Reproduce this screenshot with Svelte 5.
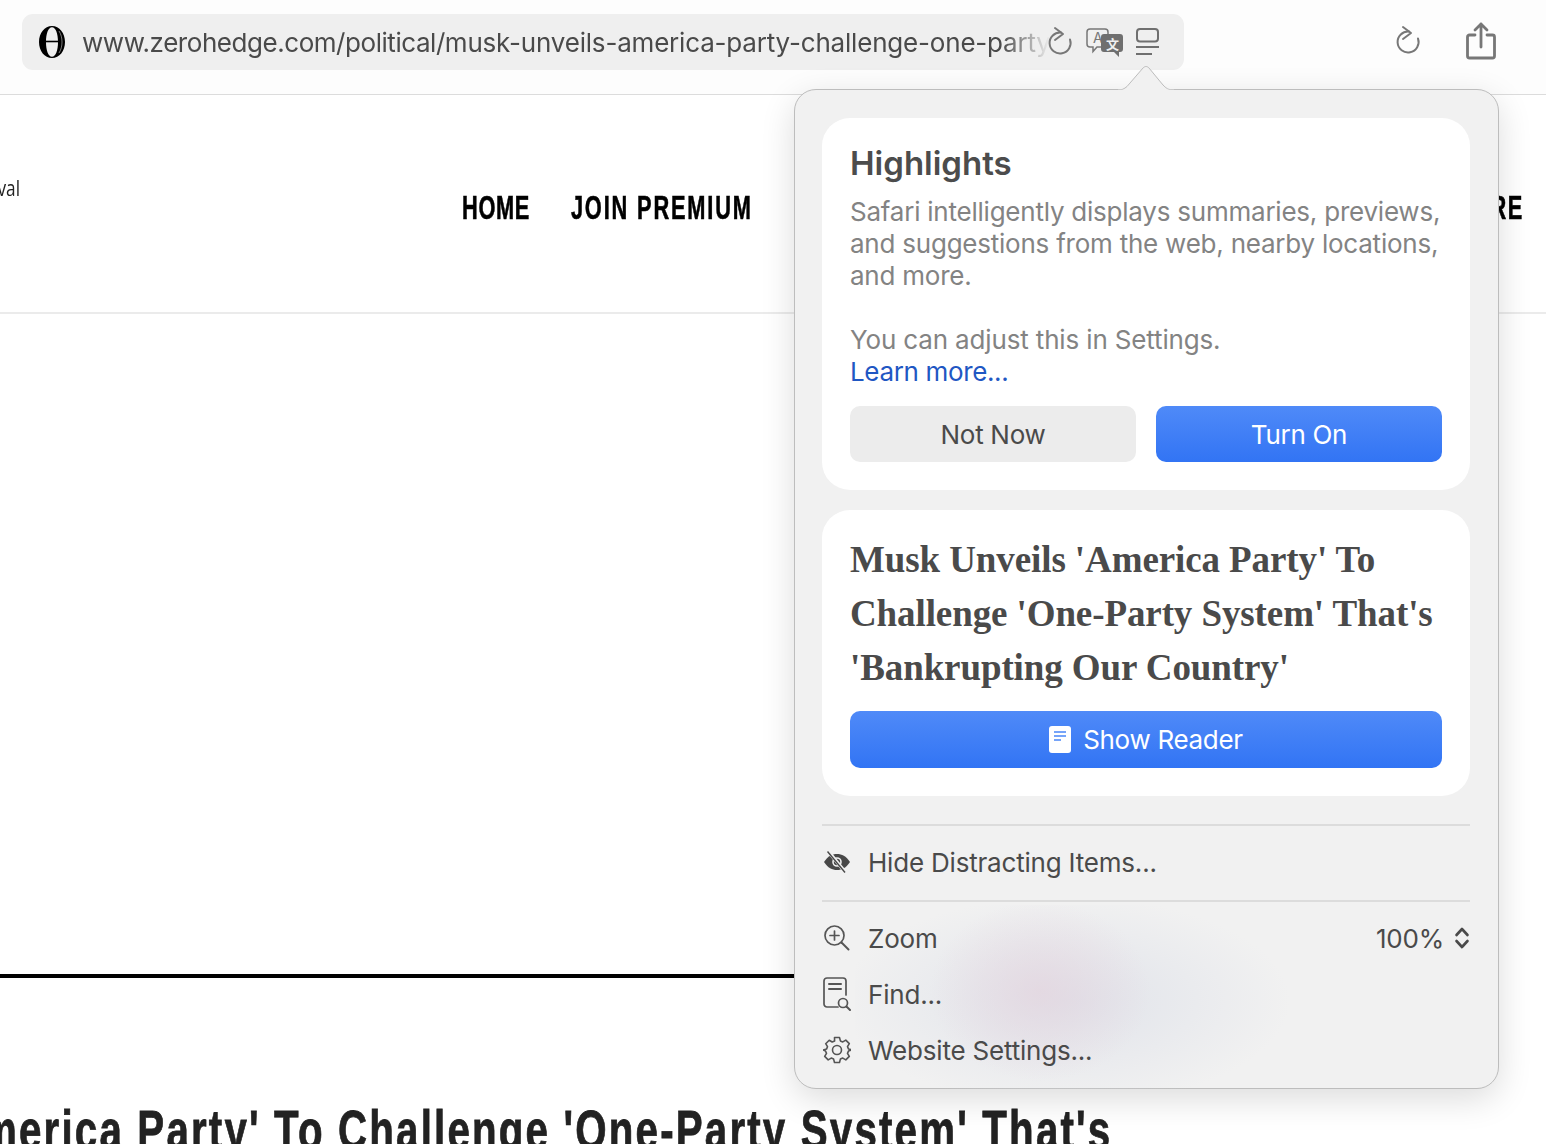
<script>
  const urlHost = 'www.zerohedge.com/political/';
  const urlPath = 'musk-unveils-america-party-challenge-one-party-system-bankrupting';
</script>

<div class="page">
  <header class="toolbar">
    <div class="urlbar">
      <svg class="favicon" viewBox="0 0 28 34" width="28" height="34" aria-hidden="true">
        <path fill-rule="evenodd" d="M14 1C6.500 1 1 8 1 17s5.500 16 13 16 13-7 13-16S21.500 1 14 1zM14 2.300c3.800 0 6 6.500 6 14.700s-2.200 14.700-6 14.700S8 25.200 8 17 10.200 2.300 14 2.300z" fill="#000"/>
        <path d="M7 16.500h14" stroke="#000" stroke-width="1.600"/>
        <path d="M21 6c2 3 3 7 3 11s-1 8-3 11" fill="none" stroke="#999" stroke-width="0.800"/>
      </svg>
      <span class="url">{urlHost}<span class="url-path">{urlPath}</span></span>
      <div class="url-icons">
        <svg class="reload" viewBox="0 0 28 32" width="28" height="32" fill="none" stroke="#777" stroke-width="2" stroke-linecap="round" stroke-linejoin="round" aria-hidden="true">
          <path d="M15 6.500a10.500 10.500 0 1 0 9 7"/>
          <path d="M9 2l8 6-8 6"/>
        </svg>
        <svg class="translate" viewBox="0 0 38 30" width="38" height="30" aria-hidden="true">
          <path d="M4 2h15a3 3 0 0 1 3 3v12a3 3 0 0 1-3 3h-8l-4 4.500V20H4a3 3 0 0 1-3-3V5a3 3 0 0 1 3-3z" fill="#f0f0f0" stroke="#777" stroke-width="1.500"/>
          <text x="7" y="16" class="glyph-a">A</text>
          <path d="M18 7h16a3 3 0 0 1 3 3v12a3 3 0 0 1-3 3h-1v5l-5-5H18a3 3 0 0 1-3-3V10a3 3 0 0 1 3-3z" fill="#6f6f6f"/>
          <text x="20" y="22" class="glyph-b">文</text>
        </svg>
        <svg class="reader" viewBox="0 0 24 28" width="24" height="28" fill="none" stroke="#6f6f6f" stroke-width="2" aria-hidden="true">
          <rect x="1" y="1" width="21" height="12.500" rx="3"/>
          <path d="M0 19h23M0 26h16"/>
        </svg>
      </div>
    </div>
    <div class="tools">
      <svg viewBox="0 0 28 32" width="28" height="32" fill="none" stroke="#777" stroke-width="2" stroke-linecap="round" stroke-linejoin="round" aria-hidden="true">
        <path d="M15 6.500a10.500 10.500 0 1 0 9 7"/>
        <path d="M9 2l8 6-8 6"/>
      </svg>
      <svg viewBox="0 0 30 38" width="30" height="38" fill="none" stroke="#777" stroke-width="2.800" stroke-linecap="round" stroke-linejoin="round" aria-hidden="true">
        <path d="M9 13H3.500a2 2 0 0 0-2 2v19a2 2 0 0 0 2 2h23a2 2 0 0 0 2-2V15a2 2 0 0 0-2-2H21"/>
        <path d="M15 25V2M9 8l6-6 6 6"/>
      </svg>
    </div>
  </header>

  <section class="masthead">
    <span class="tagline">val</span>
    <nav class="nav"><span class="home">HOME</span><span class="join">JOIN PREMIUM</span><span class="more">CONTRIBUTORS</span><span class="store">STORE</span></nav>
  </section>

  <section class="hero">
    <div class="rule"></div>
    <h1 class="headline">Musk Unveils 'America Party' To Challenge 'One-Party System' That's</h1>
  </section>

  <aside class="popover">
    <svg class="arrow" viewBox="0 0 64 26" width="64" height="26" aria-hidden="true">
      <path d="M3 25c4 0 6-1 9-3.500L28 3c2-2 4-2 6 0l14 17c3 3 5 5 11 5" fill="#f1f1f1" stroke="#bdbdbd" stroke-width="1"/>
      <path d="M3 26h56v-1.200H3z" fill="#f1f1f1"/>
    </svg>
    <div class="blob"></div>

    <div class="card highlights">
      <h2>Highlights</h2>
      <p>Safari intelligently displays summaries, previews, and suggestions from the web, nearby locations, and more.</p>
      <p class="adjust">You can adjust this in Settings.<br /><a href="#learn">Learn more...</a></p>
      <div class="actions">
        <button class="btn secondary">Not Now</button>
        <button class="btn primary">Turn On</button>
      </div>
    </div>

    <div class="card reader-card">
      <h3>Musk Unveils 'America Party' To Challenge 'One-Party System' That's 'Bankrupting Our Country'</h3>
      <button class="btn primary show">
        <svg viewBox="0 0 22 27" width="22" height="27" aria-hidden="true">
          <rect width="22" height="27" rx="3" fill="#fff"/>
          <path d="M5 6h12M5 10h12M5 14h7" stroke="#4a86f7" stroke-width="1.600"/>
        </svg>
        Show Reader
      </button>
    </div>

    <div class="menu">
      <div class="item solo">
        <svg viewBox="0 0 28 24" width="28" height="24" aria-hidden="true">
          <path d="M1 12C5 6 9 4 14 4s9 2 13 8c-4 6-8 8-13 8S5 18 1 12z" fill="#484848"/>
          <circle cx="14" cy="12" r="4" fill="none" stroke="#f1f1f1" stroke-width="1.600"/>
          <path d="M5 1l18 22" stroke="#f1f1f1" stroke-width="3.500"/>
          <path d="M4.500 1.500l17.500 21" stroke="#484848" stroke-width="1.400"/>
        </svg>
        <span>Hide Distracting Items...</span>
      </div>
      <div class="group">
        <div class="item">
          <svg viewBox="0 0 28 28" width="28" height="28" fill="none" stroke="#555" stroke-width="1.700" stroke-linecap="round" aria-hidden="true">
            <circle cx="11.500" cy="11.500" r="9.500"/>
            <path d="M18.500 18.500l7 7" stroke-width="2"/>
            <path d="M11.500 7v9M7 11.500h9"/>
          </svg>
          <span>Zoom</span>
          <span class="value">100%
            <svg viewBox="0 0 16 24" width="16" height="24" fill="none" stroke="#4a4a4a" stroke-width="2.600" stroke-linecap="round" stroke-linejoin="round" aria-hidden="true">
              <path d="M2.500 9L8 3l5.500 6M2.500 15L8 21l5.500-6"/>
            </svg>
          </span>
        </div>
        <div class="item">
          <svg viewBox="0 0 28 34" width="28" height="34" fill="none" stroke="#555" stroke-width="1.700" stroke-linecap="round" aria-hidden="true">
            <path d="M15 30H4a3 3 0 0 1-3-3V4a3 3 0 0 1 3-3h16a3 3 0 0 1 3 3v14"/>
            <path d="M6 7h12M6 12h12" stroke-width="2"/>
            <circle cx="20" cy="26" r="4.500"/>
            <path d="M23.500 29.500l3.500 3.500" stroke-width="2"/>
          </svg>
          <span>Find...</span>
        </div>
        <div class="item">
          <svg viewBox="0 0 28 28" width="28" height="28" fill="none" stroke="#555" stroke-width="1.600" stroke-linejoin="round" aria-hidden="true">
            <path d="M11.500 1.500h5l.9 3.400 2.400 1 3-1.800 3.500 3.500-1.800 3 1 2.400 3.400.9v0l-3.400 1.100-1 2.400 1.800 3-3.500 3.500-3-1.800-2.400 1-.9 3.400h-5l-.9-3.400-2.400-1-3 1.800-3.500-3.500 1.800-3-1-2.400L.1 14l3.400-.9 1-2.400-1.800-3 3.500-3.500 3 1.800 2.400-1z"/>
            <circle cx="14" cy="14" r="4.500"/>
          </svg>
          <span>Website Settings...</span>
        </div>
      </div>
    </div>
  </aside>
</div>

<style>
  :global(body) {
    margin: 0;
    background: #fff;
  }
  .page {
    position: relative;
    width: 1546px;
    height: 1144px;
    overflow: hidden;
    font-family: Inter, "Noto Sans", sans-serif;
    color: #4a4a4a;
  }
  .toolbar {
    box-sizing: border-box;
    height: 95px;
    padding: 14px 50px 0 22px;
    display: flex;
    justify-content: space-between;
    align-items: flex-start;
    background: #fdfdfd;
    border-bottom: 1px solid #dcdcdc;
  }
  .urlbar {
    box-sizing: border-box;
    width: 1162px;
    height: 56px;
    padding: 0 21px 0 16px;
    display: flex;
    align-items: center;
    background: #efefef;
    border-radius: 11px;
  }
  .favicon {
    flex: none;
  }
  .url {
    flex: none;
    width: 968px;
    margin-left: 16px;
    font-size: 26px;
    letter-spacing: -0.45px;
    white-space: nowrap;
    overflow: hidden;
    color: #4a4a4a;
    -webkit-mask-image: linear-gradient(to right, #000 95%, transparent 100%);
    mask-image: linear-gradient(to right, #000 95%, transparent 100%);
  }
  .url-path {
    letter-spacing: -0.19px;
  }
  .url-icons {
    display: flex;
    align-items: center;
    margin-left: -4px;
    gap: 12px;
  }
  .glyph-a {
    font: 14px Inter, sans-serif;
    fill: #777;
  }
  .glyph-b {
    font: 700 13px "Noto Sans CJK SC", sans-serif;
    fill: #f0f0f0;
  }
  .tools {
    display: flex;
    align-items: center;
    gap: 44px;
    margin-top: 8px;
  }
  .masthead {
    position: relative;
    box-sizing: border-box;
    height: 219px;
    border-bottom: 2px solid #ebebeb;
    overflow: hidden;
  }
  .tagline {
    position: absolute;
    left: -14px;
    top: 79px;
    font: 21px "Open Sans", sans-serif;
    transform: scaleX(.82);
    transform-origin: left;
    color: #222;
    letter-spacing: 0;
    padding-left: 14px;
  }
  .nav {
    display: flex;
    gap: 56px;
    width: 1609px;
    padding: 94px 0 0 462px;
    font: 700 33px "Liberation Sans", sans-serif;
    color: #000;
    letter-spacing: 2.5px;
    -webkit-text-stroke: 0.6px #000;
    white-space: nowrap;
    transform: scaleX(.66);
    transform-origin: 462px 0;
  }
  .nav .home {
    letter-spacing: 1px;
    margin-right: 6px;
  }
  .nav .join {
    letter-spacing: 2.8px;
  }
  .nav .more {
    margin-left: 6px;
  }
  .nav .store {
    margin-left: auto;
  }
  .hero {
    position: relative;
    height: 830px;
    overflow: hidden;
  }
  .rule {
    width: 1000px;
    margin-top: 660px;
    height: 4px;
    background: #000;
  }
  .headline {
    margin: 119px 0 0 -359px;
    font: 700 56px "Liberation Sans", sans-serif;
    letter-spacing: 3px;
    -webkit-text-stroke: 0.8px #222;
    color: #222;
    white-space: nowrap;
    transform: scaleX(.72);
    transform-origin: left top;
  }
  .popover {
    position: absolute;
    left: 794px;
    top: 89px;
    box-sizing: border-box;
    width: 705px;
    height: 1000px;
    padding: 28px 28px 0 27px;
    background: #f1f1f1;
    border: 1px solid #bdbdbd;
    border-radius: 22px;
    box-shadow: 0 10px 34px rgba(0, 0, 0, 0.14);
  }
  .arrow {
    position: absolute;
    left: 320px;
    top: -25px;
  }
  .blob {
    position: absolute;
    left: 60px;
    top: 815px;
    width: 440px;
    height: 184px;
    background:
      radial-gradient(ellipse 110px 90px at 185px 86px, rgba(228, 212, 222, 0.7), transparent),
      radial-gradient(ellipse 225px 105px at 210px 96px, rgba(222, 225, 233, 0.9), transparent);
  }
  .card {
    position: relative;
    box-sizing: border-box;
    background: #fff;
    border-radius: 28px;
    padding: 0 28px;
  }
  .highlights {
    height: 372px;
    padding-top: 23px;
  }
  h2 {
    margin: 0;
    font-size: 33px;
    line-height: 44px;
    font-weight: 600;
    letter-spacing: 0;
    color: #4c4c4c;
  }
  .highlights p {
    margin: 11px 0 0;
    font-size: 26px;
    line-height: 32px;
    letter-spacing: -0.23px;
    color: #838383;
  }
  .highlights p.adjust {
    margin-top: 32px;
    letter-spacing: -0.15px;
  }
  a {
    color: #1f57c3;
    text-decoration: none;
    letter-spacing: -0.35px;
  }
  .actions {
    display: flex;
    gap: 20px;
    margin-top: 18px;
  }
  .btn {
    flex: 1;
    height: 56px;
    border: 0;
    border-radius: 10px;
    font: 26px Inter, sans-serif;
    letter-spacing: -0.3px;
    display: flex;
    align-items: center;
    justify-content: center;
  }
  .secondary {
    background: #ececec;
    color: #4a4a4a;
  }
  .primary {
    background: linear-gradient(#4f8af8, #3274f4);
    color: #fff;
  }
  .reader-card {
    height: 286px;
    margin-top: 20px;
    padding-top: 23px;
  }
  h3 {
    margin: 0;
    font: 700 37px/54px "Liberation Serif", serif;
    letter-spacing: -0.1px;
    color: #4a4a4a;
  }
  .show {
    width: 100%;
    height: 57px;
    margin-top: 16px;
    gap: 12px;
  }
  .menu {
    margin-top: 28px;
    border-top: 2px solid #dcdcdc;
    position: relative;
  }
  .item {
    display: flex;
    align-items: center;
    height: 56px;
    font-size: 26px;
    letter-spacing: -0.2px;
    color: #4a4a4a;
  }
  .item > svg {
    flex: none;
    width: 28px;
    margin-right: 17px;
    margin-left: 1px;
  }
  .solo {
    box-sizing: content-box;
    height: 72px;
    padding-bottom: 2px;
    border-bottom: 2px solid #dcdcdc;
  }
  .group {
    padding-top: 8px;
  }
  .value {
    margin-left: auto;
    display: flex;
    align-items: center;
    gap: 10px;
  }
</style>
